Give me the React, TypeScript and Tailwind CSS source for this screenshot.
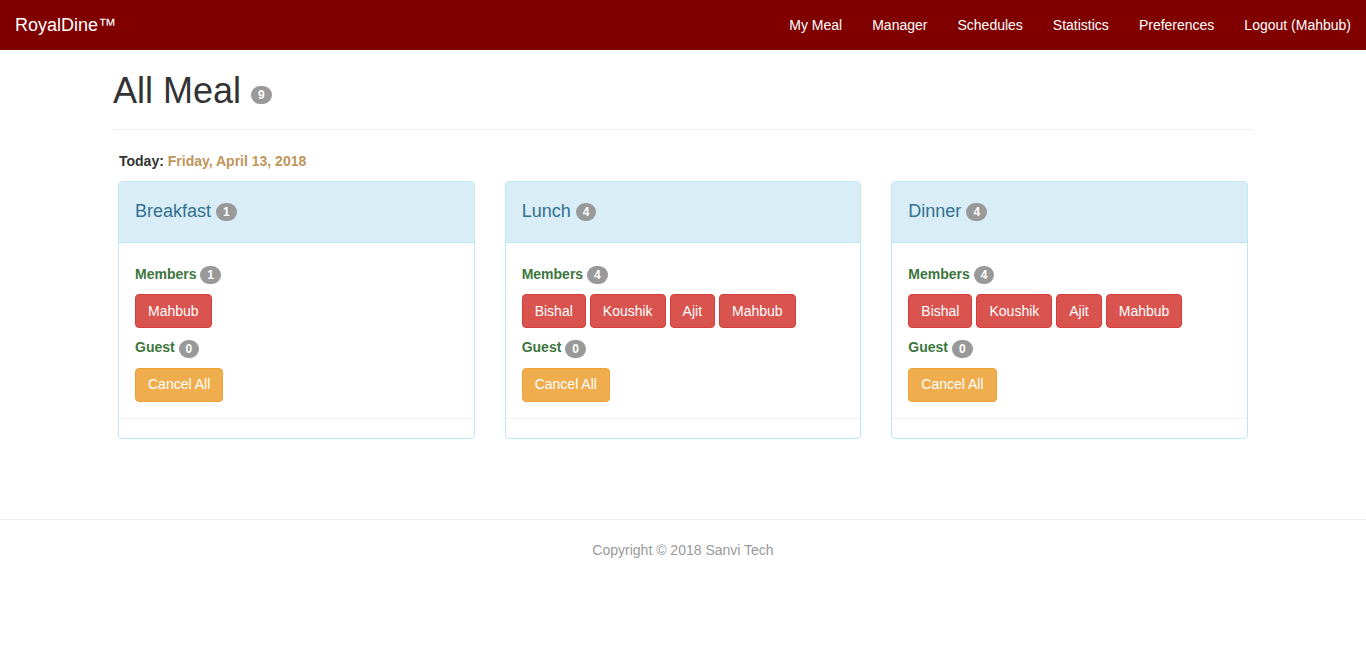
const navLinks = ['My Meal', 'Manager', 'Schedules', 'Statistics', 'Preferences', 'Logout (Mahbub)'];

interface Meal {
    name: string;
    members: string[];
    guests: number;
}

const meals: Meal[] = [
    { name: 'Breakfast', members: ['Mahbub'], guests: 0 },
    { name: 'Lunch', members: ['Bishal', 'Koushik', 'Ajit', 'Mahbub'], guests: 0 },
    { name: 'Dinner', members: ['Bishal', 'Koushik', 'Ajit', 'Mahbub'], guests: 0 },
];

const Badge = ({ value, className = '' }: { value: number; className?: string }) => (
    <span
        className={`inline-block min-w-[10px] px-[7px] py-[3px] rounded-[10px] bg-[#999] text-white text-[12px] font-bold leading-none text-center align-middle ${className}`}
    >
        {value}
    </span>
);

const MealCard = ({ meal }: { meal: Meal }) => (
    <div className="border border-[#bce8f1] rounded-[4px] bg-white">
        <div className="h-[61px] flex items-center px-[16px] bg-[#d9edf7] border-b border-[#bce8f1] rounded-t-[3px]">
            <h3 className="text-[18px] leading-none text-[#31708f]">
                {meal.name} <Badge value={meal.members.length} className="relative -top-[1px]" />
            </h3>
        </div>
        <div className="px-[16px] pt-[21px] pb-[16px] border-b border-[#f2f2f2]">
            <div className="text-[14px] leading-[20px] font-bold text-[#3c763d]">
                Members <Badge value={meal.members.length} />
            </div>
            <div className="mt-[10px] flex gap-[4px]">
                {meal.members.map(m => (
                    <button
                        key={m}
                        className="h-[34px] px-[12px] rounded-[4px] bg-[#d9534f] border border-[#d43f3a] text-white text-[14px]"
                    >
                        {m}
                    </button>
                ))}
            </div>
            <div className="mt-[9px] text-[14px] leading-[20px] font-bold text-[#3c763d]">
                Guest <Badge value={meal.guests} />
            </div>
            <div className="mt-[10px]">
                <button className="h-[34px] px-[12px] rounded-[4px] bg-[#f0ad4e] border border-[#eea236] text-white text-[14px]">
                    Cancel All
                </button>
            </div>
        </div>
        <div className="h-[19px]" />
    </div>
);

export default function App() {
    return (
        <div className="min-h-screen bg-white text-[#333] text-[14px] font-['Liberation_Sans',Arial,sans-serif]">
            <nav className="h-[50px] bg-[#800000] flex items-center justify-between">
                <a className="pl-[15px] text-[18px] text-white">RoyalDine™</a>
                <ul className="flex">
                    {navLinks.map(l => (
                        <li key={l} className="px-[15px] text-[14px] text-white leading-[50px]">
                            {l}
                        </li>
                    ))}
                </ul>
            </nav>

            <div className="w-[1140px] mx-auto">
                <div className="pt-[21px] pb-[18px] border-b border-[#eee]">
                    <h1 className="text-[36px] leading-[40px]">
                        All Meal <Badge value={9} className="relative top-[2px]" />
                    </h1>
                </div>

                <div className="px-[5px] pt-[21px]">
                    <p className="text-[14px] leading-[20px] font-bold pl-[1px]">
                        Today: <span className="text-[#c0955a]">Friday, April 13, 2018</span>
                    </p>
                    <div className="mt-[10px] grid grid-cols-3 gap-x-[30px]">
                        {meals.map(meal => (
                            <MealCard key={meal.name} meal={meal} />
                        ))}
                    </div>
                </div>
            </div>

            <footer className="mt-[80px] border-t border-[#eee] pt-[20px] text-center text-[14px] text-[#999]">
                Copyright © 2018 Sanvi Tech
            </footer>
        </div>
    );
}
